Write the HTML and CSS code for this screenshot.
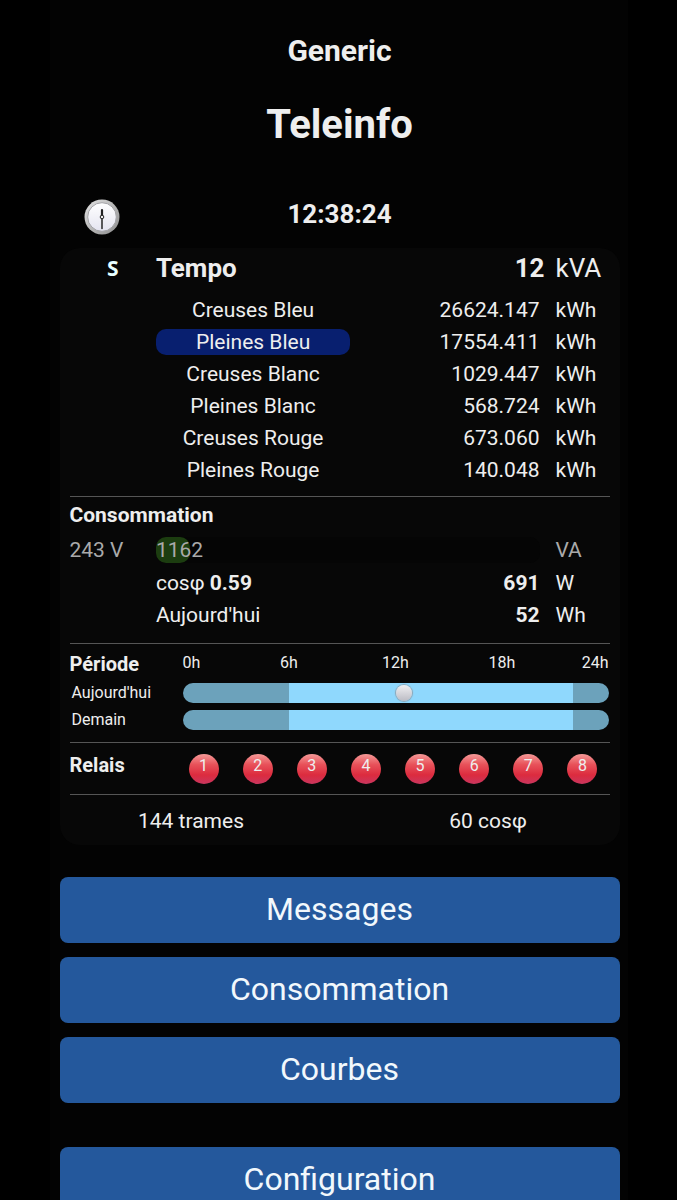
FILE: index.html
```html
<!DOCTYPE html>
<html lang="fr">
<head>
    <meta charset="UTF-8">
    <meta name="viewport" content="width=device-width, initial-scale=1.0">
    <title>Generic - Teleinfo</title>
    <link rel="stylesheet" href="styles.css">
</head>
<body>
    <div class="page">

        <!-- Titres -->
        <header>
            <h3>Generic</h3>
            <h2>Teleinfo</h2>
        </header>

        <!-- Horloge -->
        <div class="time">
            <svg class="clock" viewBox="0 0 36 36" aria-hidden="true">
                <defs>
                    <linearGradient id="rim" x1="0" y1="0" x2="1" y2="1">
                        <stop offset="0" stop-color="#e4e4e4"/>
                        <stop offset="1" stop-color="#8c8c8c"/>
                    </linearGradient>
                    <linearGradient id="dial" x1="0" y1="0" x2="0" y2="1">
                        <stop offset="0" stop-color="#ffffff"/>
                        <stop offset="1" stop-color="#e4e4f0"/>
                    </linearGradient>
                </defs>
                <circle cx="18" cy="18" r="17.5" fill="url(#rim)"/>
                <circle cx="18" cy="18" r="14.3" fill="url(#dial)" stroke="#a4a4a8" stroke-width="1"/>
                <path d="M18 11v7" stroke="#222" stroke-width="2.2" stroke-linecap="round"/>
                <path d="M18 18v11.500" stroke="#333" stroke-width="1.6" stroke-linecap="round"/>
                <circle cx="18" cy="18" r="1.8" fill="#eee" stroke="#222" stroke-width="1"/>
            </svg>
            <span>12:38:24</span>
        </div>

        <main class="panel">

            <!-- Contrat et compteurs -->
            <table>
                <colgroup><col class="c-label"><col class="c-name"><col><col class="c-unit"></colgroup>
                <thead>
                    <tr>
                        <th class="mode">S</th>
                        <th>Tempo</th>
                        <th class="power">12</th>
                        <th class="unit">kVA</th>
                    </tr>
                </thead>
                <tbody>
                    <tr><td></td><td class="name">Creuses Bleu</td><td class="value">26624.147</td><td class="unit">kWh</td></tr>
                    <tr><td></td><td class="name"><span class="active">Pleines Bleu</span></td><td class="value">17554.411</td><td class="unit">kWh</td></tr>
                    <tr><td></td><td class="name">Creuses Blanc</td><td class="value">1029.447</td><td class="unit">kWh</td></tr>
                    <tr><td></td><td class="name">Pleines Blanc</td><td class="value">568.724</td><td class="unit">kWh</td></tr>
                    <tr><td></td><td class="name">Creuses Rouge</td><td class="value">673.060</td><td class="unit">kWh</td></tr>
                    <tr><td></td><td class="name">Pleines Rouge</td><td class="value">140.048</td><td class="unit">kWh</td></tr>
                </tbody>
            </table>

            <!-- Consommation -->
            <section class="conso">
                <h4>Consommation</h4>
                <table>
                    <colgroup><col class="c-label"><col class="c-name"><col><col class="c-unit"></colgroup>
                    <tr class="dim">
                        <td>243 V</td>
                        <td colspan="2"><div class="gauge"><div class="level" style="width: 9%">1162</div></div></td>
                        <td class="unit">VA</td>
                    </tr>
                    <tr><td></td><td>cosφ <b>0.59</b></td><td class="value"><b>691</b></td><td class="unit">W</td></tr>
                    <tr><td></td><td>Aujourd'hui</td><td class="value"><b>52</b></td><td class="unit">Wh</td></tr>
                </table>
            </section>

            <!-- Calendrier -->
            <section class="period">
                <h4>Période</h4>
                <div class="hours"><span>0h</span><span>6h</span><span>12h</span><span>18h</span><span>24h</span></div>
                <span class="day">Aujourd'hui</span>
                <div class="bar"><i class="low six"></i><i class="high"></i><i class="low two"></i><b class="now" style="left: 52%"></b></div>
                <span class="day">Demain</span>
                <div class="bar"><i class="low six"></i><i class="high"></i><i class="low two"></i></div>
            </section>

            <!-- Relais -->
            <section class="relays">
                <h4>Relais</h4>
                <ul>
                    <li><span>1</span></li>
                    <li><span>2</span></li>
                    <li><span>3</span></li>
                    <li><span>4</span></li>
                    <li><span>5</span></li>
                    <li><span>6</span></li>
                    <li><span>7</span></li>
                    <li><span>8</span></li>
                </ul>
            </section>

            <!-- Compteurs de trames -->
            <section class="counters">
                <span>144 trames</span>
                <span>60 cosφ</span>
            </section>
        </main>

        <nav>
            <button type="button">Messages</button>
            <button type="button">Consommation</button>
            <button type="button">Courbes</button>
            <button type="button" class="config">Configuration</button>
        </nav>
    </div>
</body>
</html>
```
FILE: styles.css
```css
body {
    margin: 0;
    background-color: #000;
    color: #eee;
    font-family: Roboto, Arial, sans-serif;
    font-size: 21px;
    line-height: 32px;
}

.page {
    box-sizing: border-box;
    max-width: 578px;
    margin: 0 auto;
    padding: 30px 8px 16px 10px;
    background-color: #030303;
}

header {
    text-align: center;
}

h2, h3, h4 {
    margin: 0;
}

h3 {
    font-size: 30px;
    line-height: 42px;
}

h2 {
    margin-top: 29px;
    font-size: 40px;
    line-height: 48px;
}

h4 {
    font-size: 20px;
}

/* Horloge */
.time {
    display: grid;
    grid-template-columns: 84px 1fr 84px;
    align-items: center;
    margin: 43px 0 6px;
    height: 50px;
    font-size: 26px;
    font-weight: bold;
    text-align: center;
}

.time span {
    padding-bottom: 6px;
}

.clock {
    justify-self: center;
    width: 36px;
    height: 36px;
}

/* Panneau */
.panel {
    padding: 0 10px;
    border-radius: 20px;
    background-color: #070707;
}

table {
    width: 100%;
    border-collapse: collapse;
    table-layout: fixed;
}

.c-label {
    width: 16%;
}

.c-name {
    width: 36%;
}

.c-unit {
    width: 65px;
}

th, td {
    height: 32px;
    padding: 0;
    text-align: left;
}

thead th {
    height: 40px;
    padding-bottom: 6px;
    font-size: 26px;
}

thead .unit {
    font-weight: normal;
}

thead .mode {
    color: #e8ffff;
    font-family: "Noto Sans", sans-serif;
    font-size: 21px;
    text-align: center;
}

.name {
    text-align: center;
}

.active {
    display: block;
    border-radius: 10px;
    background-color: #081f6f;
    line-height: 26px;
}

.power, .value {
    text-align: right;
}

.value {
    padding-right: 5px;
}

.unit {
    padding-left: 11px;
}

section {
    border-top: 1px solid #555;
}

/* Consommation */
.conso {
    margin-top: 10px;
    padding: 1px 0 12px;
}

.conso h4 {
    font-size: 21px;
    line-height: 34px;
}

.dim td {
    height: 35px;
    color: #aaa;
}

.gauge {
    margin-right: 5px;
    border-radius: 10px;
    background-color: #050505;
}

.level {
    border-radius: 10px;
    background-color: #1c3d10;
    line-height: 26px;
}

/* Calendrier */
.period {
    display: grid;
    grid-template-columns: 113px 1fr;
    align-items: center;
    padding: 5px 1px 9px 0;
    font-size: 16px;
}

.period h4 {
    line-height: 30px;
}

.hours {
    display: flex;
    align-self: start;
    line-height: 28px;
}

.hours span {
    flex: 2;
    text-align: center;
}

.hours span:first-child {
    flex: 1;
    text-align: left;
}

.hours span:last-child {
    flex: 1;
    text-align: right;
}

.day {
    padding-left: 2px;
    line-height: 27px;
}

.bar {
    position: relative;
    display: flex;
    height: 20px;
}

.bar i:first-child {
    border-radius: 10px 0 0 10px;
}

.low {
    background-color: #6ca2bb;
}

.six {
    flex: 6;
}

.two {
    flex: 2;
    border-radius: 0 10px 10px 0;
}

.high {
    flex: 16;
    background-color: #8fd8fd;
}

.now {
    position: absolute;
    top: 2px;
    width: 16px;
    height: 16px;
    margin-left: -8px;
    border-radius: 50%;
    background: linear-gradient(#f0f0f2, #bcbcc4);
    box-shadow: 0 0 1px 1px #8ba4b4;
}

/* Relais */
.relays {
    display: grid;
    grid-template-columns: 107px 1fr;
    padding: 6px 0;
}

.relays ul {
    display: grid;
    grid-template-columns: repeat(8, 1fr);
    justify-items: center;
    margin: 0;
    padding: 5px 0 4px;
    list-style: none;
}

.relays span {
    display: block;
    width: 30px;
    height: 30px;
    border-radius: 50%;
    background: linear-gradient(#f59a98, #e8525a 35%, #dc2b3e 70%, #c9365f);
    font-size: 16px;
    line-height: 24px;
    text-align: center;
}

/* Compteurs */
.counters {
    display: grid;
    grid-template-columns: 45% 45%;
    justify-content: space-between;
    padding: 10px 0 8px;
    text-align: center;
}

/* Boutons */
nav {
    display: grid;
    gap: 14px;
    margin-top: 32px;
}

button {
    height: 66px;
    padding: 0 0 2px;
    border: 0;
    border-radius: 8px;
    background-color: #24589c;
    color: #f2f8fc;
    font-family: inherit;
    font-size: 32px;
    cursor: pointer;
}

.config {
    margin-top: 30px;
}
```
